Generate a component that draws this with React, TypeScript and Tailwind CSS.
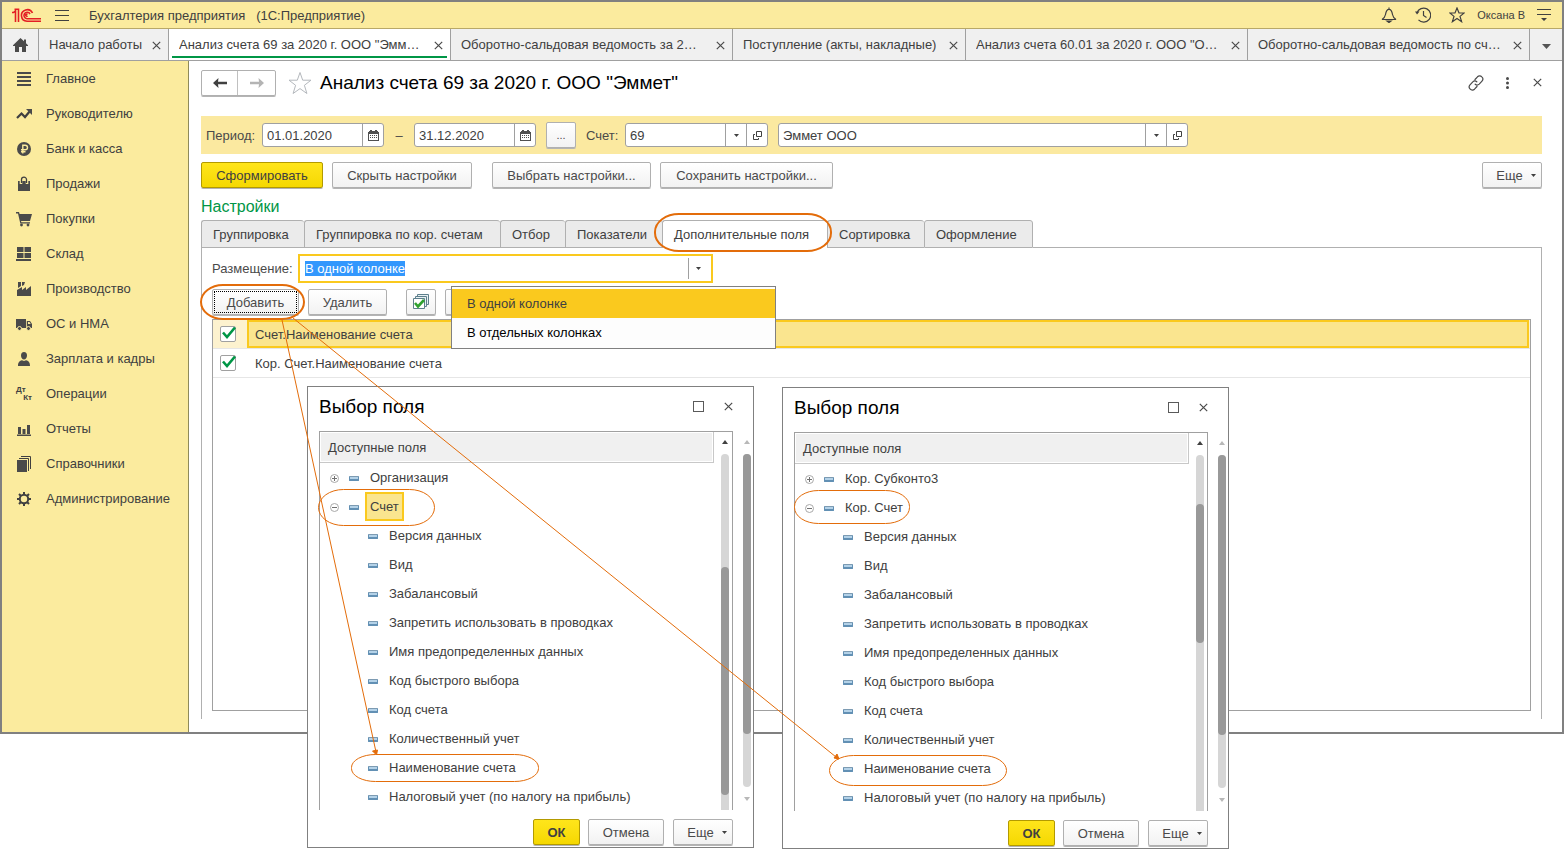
import { useEffect, useRef } from "react";
import type { ReactNode } from "react";
import { clsx } from "clsx";

const menu = [
  { label: "Главное", icon: <path d="M1 1h14v2H1zM1 5h14v2H1zM1 9h14v2H1zM1 13h14v2H1z" /> },
  {
    label: "Руководителю",
    icon: (
      <>
        <path d="M1 12l4.5-4.5 3.5 3.5 5-6" fill="none" stroke="currentColor" strokeWidth="2.2" />
        <path d="M10 3h6v6z" />
      </>
    ),
  },
  {
    label: "Банк и касса",
    icon: (
      <>
        <circle cx="8" cy="8" r="7" />
        <path d="M6.8 12.5V4.2h2.4a2.3 2.3 0 0 1 0 4.6H5M5 10.7h4.5" fill="none" stroke="#fbeb9e" strokeWidth="1.4" />
      </>
    ),
  },
  {
    label: "Продажи",
    icon: (
      <>
        <path d="M2 5h12v10H2z" />
        <path d="M5 8V3.5a3 2.8 0 0 1 6 0V8" fill="none" stroke="#fbeb9e" strokeWidth="2.6" />
        <path d="M5.5 7V3.5a2.5 2.3 0 0 1 5 0V7" fill="none" stroke="currentColor" strokeWidth="1.3" />
      </>
    ),
  },
  {
    label: "Покупки",
    icon: (
      <>
        <path d="M0 1h3l.6 2H16l-2 7H5l.4 1.2H14v1.3H4.3L2 2.5H0z" />
        <circle cx="5.5" cy="14" r="1.4" />
        <circle cx="12" cy="14" r="1.4" />
      </>
    ),
  },
  { label: "Склад", icon: <path d="M1 1h6.5v5H1zM8.5 1H15v5H8.5zM1 7h6.5v5H1zM8.5 7H15v5H8.5zM0 13h15v2H0z" /> },
  { label: "Производство", icon: <path d="M1 15V9l5-3v3l4-3v3l5-4v10zM2 1h3v4l-3 2zM6 1h3l-1 3-2 1z" /> },
  {
    label: "ОС и НМА",
    icon: (
      <>
        <path d="M0 3h10v9H0zM10.8 5H14l2 3v4h-5.2z" />
        <path d="M12 6h1.5l1.2 2H12z" fill="#fbeb9e" />
        <circle cx="3.5" cy="12.500" r="2" stroke="#fbeb9e" />
        <circle cx="12.5" cy="12.500" r="2" stroke="#fbeb9e" />
      </>
    ),
  },
  {
    label: "Зарплата и кадры",
    icon: <path d="M8 1c2 0 3 1.5 3 3.5S9.8 8.5 8 8.5 5 6.5 5 4.5 6 1 8 1zM2 15c0-3.500 1-5 4-5.800L8 10l2-.8c3 .8 4 2.300 4 5.800z" />,
  },
  { label: "Операции", icon: null },
  { label: "Отчеты", icon: <path d="M1 13.5h14V15H1zM2 6h3v7H2zM6.5 8h3v5h-3zM11 4h3v9h-3z" /> },
  {
    label: "Справочники",
    icon: (
      <>
        <path d="M1 4h10v12H1z" />
        <path d="M3 2.5h9.5V15M5 .5h9.5V13" fill="none" stroke="currentColor" />
      </>
    ),
  },
  {
    label: "Администрирование",
    icon: (
      <>
        <circle cx="8" cy="8" r="4.2" fill="none" stroke="currentColor" strokeWidth="2" />
        <path
          d="M8 1v2.5M8 12.5V15M1 8h2.5M12.5 8H15M3 3l2 2M11 11l2 2M13 3l-2 2M5 11l-2 2"
          stroke="currentColor"
          strokeWidth="2"
        />
      </>
    ),
  },
];

const openTabs = [
  { label: "Начало работы", width: "w-[130px]" },
  { label: 'Анализ счета 69 за 2020 г. ООО "Эмм…', width: "w-[282px]", active: true },
  { label: "Оборотно-сальдовая ведомость за 2…", width: "w-[282px]" },
  { label: "Поступление (акты, накладные)", width: "w-[233px]" },
  { label: 'Анализ счета 60.01 за 2020 г. ООО "О…', width: "w-[282px]" },
  { label: "Оборотно-сальдовая ведомость по сч…", width: "w-[282px]" },
];

const settingTabs = [
  { label: "Группировка", width: "w-[103px]" },
  { label: "Группировка по кор. счетам", width: "w-[196px]" },
  { label: "Отбор", width: "w-[65px]" },
  { label: "Показатели", width: "w-[97px]" },
  { label: "Дополнительные поля", width: "w-[165px]", active: true },
  { label: "Сортировка", width: "w-[97px]" },
  { label: "Оформление", width: "w-[109px]" },
];

const accountFields = [
  "Версия данных",
  "Вид",
  "Забалансовый",
  "Запретить использовать в проводках",
  "Имя предопределенных данных",
  "Код быстрого выбора",
  "Код счета",
  "Количественный учет",
  "Наименование счета",
  "Налоговый учет (по налогу на прибыль)",
];

function Cross({ className }: { className?: string }) {
  return (
    <svg className={clsx("size-[9px] shrink-0", className)} viewBox="0 0 9 9" fill="none" stroke="#4a4a4a" strokeWidth="1.2">
      <path d="M.8.8l7.4 7.4M8.2.8L.8 8.2" />
    </svg>
  );
}

function Caret({ className }: { className?: string }) {
  return (
    <svg className={clsx("h-[3px] w-[5px] shrink-0", className)} viewBox="0 0 5 3" fill="#404040">
      <path d="M0 0h5L2.5 3z" />
    </svg>
  );
}

type ButtonProps = {
  children: ReactNode;
  className?: string;
  primary?: boolean;
  label?: string;
};

function Button({ children, className, primary, label }: ButtonProps) {
  return (
    <button
      type="button"
      aria-label={label}
      className={clsx(
        "flex h-[26px] shrink-0 items-center justify-center rounded-[2px] border bg-linear-to-b shadow-[0_1px_0_#b4b4b4]",
        primary
          ? "border-[#b39a00] from-[#ffe51a] to-[#f5d800] text-[#404040]"
          : "border-[#b0b0b0] from-white to-[#f2f2f2] text-[#4a4a4a]",
        className,
      )}
    >
      {children}
    </button>
  );
}

function CalendarIcon() {
  return (
    <svg className="size-[11px]" viewBox="0 0 11 11" fill="#505050">
      <path d="M1 1h9v1H1zM0 3h11v1H0zM0 2h11v1H0zM0 4h1v7H0zM10 4h1v7h-1zM0 10h11v1H0z" />
      <path d="M2 0h2v2H2zM7 0h2v2H7z" />
      <path d="M2 5h1v1H2zM4 5h1v1H4zM6 5h1v1H6zM8 5h1v1H8zM2 7h1v1H2zM4 7h1v1H4zM6 7h1v1H6zM8 7h1v1H8z" />
    </svg>
  );
}

function OpenIcon() {
  return (
    <svg className="size-[9px]" viewBox="0 0 9 9" fill="none" stroke="#404040">
      <path d="M3.5.5h5v5h-5zM2 3.5H.5v5h5V7" />
    </svg>
  );
}

type FieldProps = {
  id: string;
  label: string;
  value: string;
  className?: string;
  children: ReactNode;
};

function Field({ id, label, value, className, children }: FieldProps) {
  return (
    <div className={clsx("flex h-6 rounded-[3px] border border-[#a0a0a0] bg-white", className)}>
      <input id={id} aria-label={label} defaultValue={value} className="min-w-0 flex-1 px-1 text-[#404040] outline-none" />
      {children}
    </div>
  );
}

function FieldButton({ label, children }: { label: string; children: ReactNode }) {
  return (
    <button type="button" aria-label={label} className="flex w-[21px] shrink-0 items-center justify-center border-l border-[#a0a0a0]">
      {children}
    </button>
  );
}

function TitleBar() {
  return (
    <header className="flex h-[27px] items-center border-b border-[#b8a868] bg-[#fbeb9e] px-[10px]">
      <svg className="h-[15px] w-[30px]" viewBox="0 0 30 15" fill="none" stroke="#e31e24" strokeWidth="1.6">
        <path d="M0 4.5h1.5L3.5 2.8V14M2.5 1.3h4V14" />
        <path d="M20.5 5a5.8 5.8 0 1 0-5.5 8.3h14" />
        <path d="M18 6a3.2 3.2 0 1 0-3 4.7h14" />
        <path d="M15.5 6.5a1 1 0 1 0 0 1.2" />
      </svg>
      <button type="button" aria-label="Меню" className="ml-[13px] flex w-[14px] flex-col gap-1">
        <span className="h-px bg-[#404040]" />
        <span className="h-px bg-[#404040]" />
        <span className="h-px bg-[#404040]" />
      </button>
      <p className="ml-5 whitespace-pre text-[#404040]">Бухгалтерия предприятия   (1С:Предприятие)</p>
      <div className="ml-auto flex items-center gap-[18px] text-[#404040]">
        <button type="button" aria-label="Оповещения">
          <svg className="size-4" viewBox="0 0 16 16" fill="none" stroke="currentColor" strokeWidth="1.2">
            <path d="M8 .5v2M1 12.500c2-1 3-2.500 3.500-5C5 4 6 2.300 8 2.300S11 4 11.500 7.500c.5 2.500 1.500 4 3.500 5z" />
            <path d="M6 14h4l-2 1.5z" fill="currentColor" />
          </svg>
        </button>
        <button type="button" aria-label="История">
          <svg className="size-4" viewBox="0 0 16 16" fill="none" stroke="currentColor" strokeWidth="1.2">
            <path d="M2 6A7 7 0 1 1 3.5 12.8M8.5 4v4.5l3 2" />
            <path d="M0 4.500h4.5L2 7.500z" fill="currentColor" stroke="none" />
          </svg>
        </button>
        <button type="button" aria-label="Избранное">
          <svg className="size-4" viewBox="0 0 16 16" fill="none" stroke="currentColor" strokeWidth="1.2">
            <path d="M8 1l2 5h5.200l-4.200 3.400 1.600 5.300L8 11.500l-4.600 3.200L5 9.400.8 6H6z" />
          </svg>
        </button>
        <div className="-ml-[6px] flex items-center gap-3">
          <span className="text-[11px]">Оксана В</span>
          <button type="button" aria-label="Сервис">
            <svg className="h-3 w-[15px]" viewBox="0 0 15 12" fill="currentColor">
              <path d="M0 0h14v1H0zM0 5h14v1H0zM4 9h6l-3 3z" />
            </svg>
          </button>
        </div>
      </div>
    </header>
  );
}

function OpenTabs() {
  return (
    <nav className="flex h-8 border-b border-[#a0a0a0] bg-[#f0f0f0] text-[#404040]">
      <button type="button" aria-label="Начальная страница" className="flex w-[37px] shrink-0 items-center justify-center border-r border-[#a0a0a0]">
        <svg className="h-[14px] w-[15px]" viewBox="0 0 15 14" fill="#4a4a4a">
          <path d="M7.5 0L11 3.3V1.500h2v3.700l2 2v.8h-2v6H9V9H6v5H2V8H0v-.8z" />
        </svg>
      </button>
      {openTabs.map((tab) => (
        <div
          key={tab.label}
          className={clsx("flex shrink border-r border-[#a0a0a0] px-[3px]", tab.width, tab.active && "bg-white")}
        >
          <div className={clsx("flex min-w-0 flex-1 items-center justify-between pr-1 pl-[7px]", tab.active && "mb-[2px] border-b-2 border-[#009646] pt-1")}>
            <a href="#" className="truncate">{tab.label}</a>
            <button type="button" aria-label="Закрыть">
              <Cross className="mt-px size-2" />
            </button>
          </div>
        </div>
      ))}
      <button type="button" aria-label="Все окна" className="flex flex-1 items-center justify-center">
        <svg className="mt-1 h-[5px] w-[9px]" viewBox="0 0 9 5" fill="#555">
          <path d="M0 0h9L4.5 5z" />
        </svg>
      </button>
    </nav>
  );
}

function Sidebar() {
  return (
    <aside className="w-[187px] shrink-0 border-r border-[#8f8a5a] bg-[#fbeb9e]">
      <ul>
        {menu.map((item) => (
          <li key={item.label}>
            <a href="#" className="flex h-[35px] items-center gap-[14px] pl-[14px] text-[#404040]">
              {item.icon ? (
                <svg className="size-4" viewBox="0 0 16 16" fill="#4a4a4a">
                  {item.icon}
                </svg>
              ) : (
                <span className="flex w-4 flex-col text-[8px] leading-2 font-bold">
                  <span>Дт</span>
                  <span className="text-right">Кт</span>
                </span>
              )}
              {item.label}
            </a>
          </li>
        ))}
      </ul>
    </aside>
  );
}

function PageHeader() {
  return (
    <div className="flex h-[27px] items-center">
      <div className="flex h-[26px] rounded-[2px] border border-[#b0b0b0] shadow-[0_1px_0_#b4b4b4]">
        <button type="button" aria-label="Назад" className="flex w-9 items-center justify-center border-r border-[#c0c0c0]">
          <svg className="h-[10px] w-[14px]" viewBox="0 0 14 10" fill="#404040">
            <path d="M0 5l5.5-5L5 3.8h9v2.400H5L5.5 10z" />
          </svg>
        </button>
        <button type="button" aria-label="Вперед" className="flex w-[37px] items-center justify-center">
          <svg className="h-[10px] w-[14px]" viewBox="0 0 14 10" fill="#b4b4b4">
            <path d="M14 5L8.5 0 9 3.8H0v2.400h9L8.5 10z" />
          </svg>
        </button>
      </div>
      <button type="button" aria-label="Добавить в избранное" className="ml-3">
        <svg className="size-6" viewBox="0 0 24 24" fill="none" stroke="#b4b8bd">
          <path d="M12 1.5l2.7 7.7H23l-6.6 5.1 2.5 8.2L12 17.6l-6.9 4.9 2.5-8.2L1 9.2h8.3z" />
        </svg>
      </button>
      <h1 className="ml-2 text-[19px] text-black">Анализ счета 69 за 2020 г. ООО "Эммет"</h1>
      <div className="ml-auto flex items-center">
        <button type="button" aria-label="Получить ссылку">
          <svg className="size-4" viewBox="0 0 16 16" fill="none" stroke="#4a4a4a" strokeWidth="1.2" strokeLinecap="round">
            <path d="M7 4.5l2.5-2.7a3 3 0 0 1 4.3.1 3 3 0 0 1 .2 4.200l-2.800 3a3 3 0 0 1-4 .1M9 11.500l-2.500 2.700a3 3 0 0 1-4.300-.1 3 3 0 0 1-.2-4.200l2.800-3a3 3 0 0 1 4-.1" />
          </svg>
        </button>
        <button type="button" aria-label="Еще" className="ml-[22px]">
          <svg className="h-3 w-[3px]" viewBox="0 0 3 12" fill="#4a4a4a">
            <circle cx="1.5" cy="1.5" r="1.5" />
            <circle cx="1.5" cy="6" r="1.5" />
            <circle cx="1.5" cy="10.5" r="1.5" />
          </svg>
        </button>
        <button type="button" aria-label="Закрыть" className="ml-6">
          <Cross />
        </button>
      </div>
    </div>
  );
}

function FilterBar() {
  return (
    <form className="mt-5 flex h-[38px] items-center bg-[#fbe9a0] px-[5px] text-[#4a4a4a]" onSubmit={(e) => e.preventDefault()}>
      <label htmlFor="date-from" className="w-14">Период:</label>
      <Field id="date-from" label="Начало периода" value="01.01.2020" className="w-[122px]">
        <FieldButton label="Выбрать дату"><CalendarIcon /></FieldButton>
      </Field>
      <span className="w-[30px] text-center">–</span>
      <Field id="date-to" label="Конец периода" value="31.12.2020" className="w-[122px]">
        <FieldButton label="Выбрать дату"><CalendarIcon /></FieldButton>
      </Field>
      <Button className="ml-[10px] w-[30px] text-[11px]">...</Button>
      <label htmlFor="account" className="ml-[10px] w-[39px]">Счет:</label>
      <Field id="account" label="Счет" value="69" className="w-[143px]">
        <FieldButton label="Выбрать"><Caret /></FieldButton>
        <FieldButton label="Открыть"><OpenIcon /></FieldButton>
      </Field>
      <Field id="company" label="Организация" value="Эммет ООО" className="ml-[10px] w-[410px]">
        <FieldButton label="Выбрать"><Caret /></FieldButton>
        <FieldButton label="Открыть"><OpenIcon /></FieldButton>
      </Field>
    </form>
  );
}

function PlacementSelect() {
  const input = useRef<HTMLInputElement>(null);

  useEffect(() => {
    input.current?.focus();
    input.current?.select();
  }, []);

  return (
    <div className="flex items-center">
      <label htmlFor="placement" className="w-[86px] text-[#4a4a4a]">Размещение:</label>
      <div className="relative flex h-[29px] w-[415px] items-center border-2 border-[#fac91e] bg-white">
        <input
          id="placement"
          ref={input}
          role="combobox"
          aria-expanded="true"
          aria-controls="placement-options"
          defaultValue="В одной колонке"
          className="min-w-0 flex-1 px-[5px] text-[#404040] outline-none selection:bg-[#3297fd] selection:text-white"
        />
        <button type="button" aria-label="Открыть список" className="flex h-[21px] w-[23px] items-center border-l border-[#a0a0a0] pl-[7px]">
          <Caret />
        </button>
        <ul
          id="placement-options"
          role="listbox"
          className="absolute top-[30px] left-[151px] z-10 w-[325px] border border-[#808080] bg-[#fdfdfd] pt-[2px] pb-px text-black"
        >
          <li role="option" aria-selected="true" className="flex h-[29px] items-center bg-[#fac91e] pl-[15px] text-[#404040]">
            В одной колонке
          </li>
          <li role="option" aria-selected="false" className="flex h-[29px] items-center pl-[15px]">
            В отдельных колонках
          </li>
        </ul>
      </div>
    </div>
  );
}

function FieldRow({ label, selected }: { label: string; selected?: boolean }) {
  return (
    <li className="border-b border-[#e6e6e6]">
      <label className={clsx("flex h-7 items-stretch", selected && "bg-[#fdf2cf]")}>
        <span className="relative flex w-[34px] items-center pl-[7px]">
          <input type="checkbox" defaultChecked className="size-4 appearance-none rounded-[2px] border border-[#a0a0a0] bg-white" />
          <svg className="pointer-events-none absolute left-[9px] size-[14px]" viewBox="0 0 14 14" fill="none" stroke="#009646" strokeWidth="2.6">
            <path d="M1 5.5L5 10 13 .5" />
          </svg>
        </span>
        <span
          className={clsx(
            "mr-px flex flex-1 items-center border-2 pl-[6px] text-[#404040]",
            selected ? "border-[#fac91e] bg-[#fae58f]" : "border-transparent",
          )}
        >
          {label}
        </span>
      </label>
    </li>
  );
}

function CheckAllIcon() {
  return (
    <svg className="size-4" viewBox="0 0 16 16" fill="none">
      <path d="M4.5 3V.5h11v10H13M2.5 5V2.5h11v10H11" stroke="#5d7f8c" fill="#e8f0f2" />
      <path d="M.5 4.5h11v10H.5z" fill="#fff" stroke="#5d7f8c" />
      <path d="M2 9l3 3.5L11 6" stroke="#2fa12f" strokeWidth="2.6" />
    </svg>
  );
}

function Settings() {
  return (
    <section>
      <h2 className="mt-[7px] h-[25px] text-[16px] leading-6 text-[#009646]">Настройки</h2>
      <div className="flex">
        <div role="tablist" className="flex text-[#404040]">
          {settingTabs.map((tab) => (
            <button
              key={tab.label}
              type="button"
              role="tab"
              aria-selected={!!tab.active}
              className={clsx(
                "h-7 rounded-t-[3px] border-t border-l border-[#b0b0b0] px-[11px] text-left whitespace-nowrap last:border-r",
                tab.width,
                tab.active ? "bg-white pb-px" : "border-b bg-[#ebebeb]",
              )}
            >
              {tab.label}
            </button>
          ))}
        </div>
        <div className="flex-1 border-b border-[#b0b0b0]" />
      </div>
      <div className="border-x border-[#b0b0b0] px-[10px] pt-[6px] pb-2">
        <PlacementSelect />
        <div className="mt-[6px] flex">
          <Button className="w-[87px] p-px">
            <span className="flex h-full w-full items-center justify-center border border-dotted border-black">Добавить</span>
          </Button>
          <Button className="ml-[9px] w-[79px]">Удалить</Button>
          <Button className="ml-[19px] w-[30px]" label="Установить флажки"><CheckAllIcon /></Button>
          <Button className="ml-[9px] w-[30px]" label="Снять флажки">{null}</Button>
        </div>
        <ul className="mt-1 min-h-[392px] border border-[#a0a0a0]">
          <FieldRow label="Счет.Наименование счета" selected />
          <FieldRow label="Кор. Счет.Наименование счета" />
        </ul>
      </div>
    </section>
  );
}

function Dash() {
  return <span className="mt-[2px] h-[5px] w-[10px] shrink-0 rounded-[1px] border border-b-2 border-[#6290b4] border-t-[#7d9bb2] bg-[#b4d2e8]" />;
}

function Expander({ open }: { open?: boolean }) {
  return (
    <button type="button" aria-label={open ? "Свернуть" : "Развернуть"} className="mt-[2px] mr-[10px]">
      <svg className="size-[9px]" viewBox="0 0 9 9" fill="none" stroke="#a8a8a8">
        <circle cx="4.5" cy="4.5" r="4" />
        <path d={open ? "M2 4.5h5" : "M2 4.5h5M4.5 2v5"} stroke="#707070" />
      </svg>
    </button>
  );
}

type PickerProps = {
  id: string;
  closed: string;
  opened: string;
  current?: boolean;
  thumb: string;
  className: string;
};

function FieldPicker({ id, closed, opened, current, thumb, className }: PickerProps) {
  return (
    <section role="dialog" aria-labelledby={id} className={clsx("absolute w-[447px] border border-[#808080] bg-white pb-[2px] pl-[11px] text-[#404040]", className)}>
      <div className="mb-[5px] flex h-[39px] items-center pr-5">
        <h2 id={id} className="text-[19px] text-black">Выбор поля</h2>
        <button type="button" aria-label="Развернуть окно" className="ml-auto size-[11px] border border-[#5a5a5a]" />
        <button type="button" aria-label="Закрыть" className="ml-5">
          <Cross />
        </button>
      </div>
      <div className="flex h-[379px] pr-[2px]">
        <div className="flex flex-1 border border-b-0 border-[#a0a0a0]">
          <div className="flex-1">
            <div className="flex h-[31px] items-center border-r border-b border-[#c8c8c8] bg-[#f0f0f0] pl-2 shadow-[inset_0_0_0_1px_white]">
              Доступные поля
            </div>
            <ul>
              <li className="flex h-[29px] items-center pl-[10px]">
                <Expander />
                <Dash />
                <span className="ml-[11px]">{closed}</span>
              </li>
              <li className="flex h-[29px] items-center pl-[10px]">
                <Expander open />
                <Dash />
                <span className={clsx("ml-[6px] flex h-[29px] items-center border-2 px-[3px]", current ? "border-[#fac91e] bg-[#fae58f]" : "border-transparent")}>
                  {opened}
                </span>
              </li>
              {accountFields.map((field) => (
                <li key={field} className="flex h-[29px] items-center gap-[11px] pl-12">
                  <Dash />
                  {field}
                </li>
              ))}
            </ul>
          </div>
          <div className="flex w-[18px] flex-col items-center pt-2 pl-1">
            <svg className="h-1 w-[6px]" viewBox="0 0 6 4" fill="#404040"><path d="M3 0l3 4H0z" /></svg>
            <div className="mt-[10px] w-2 flex-1 rounded-t-full bg-[#d6d6d6]">
              <div className={clsx("rounded-full bg-[#999]", thumb)} />
            </div>
          </div>
        </div>
        <div className="ml-[10px] flex w-2 flex-col items-center py-[9px]">
          <svg className="h-1 w-[6px]" viewBox="0 0 6 4" fill="#b8b8b8"><path d="M3 0l3 4H0z" /></svg>
          <div className="my-[10px] w-2 flex-1 rounded-full bg-[#d6d6d6]">
            <div className="h-[280px] rounded-full bg-[#999]" />
          </div>
          <svg className="h-1 w-[6px]" viewBox="0 0 6 4" fill="#b8b8b8"><path d="M3 4l3-4H0z" /></svg>
        </div>
      </div>
      <div className="mt-[9px] flex justify-end pr-5">
        <Button primary className="w-[47px] font-bold">ОК</Button>
        <Button className="ml-2 w-[76px]">Отмена</Button>
        <Button className="ml-[9px] w-[60px] gap-2 pl-2">Еще <Caret className="mt-px" /></Button>
      </div>
    </section>
  );
}

function Callouts() {
  return (
    <svg className="pointer-events-none absolute top-0 left-0 z-20 h-[851px] w-[1564px]" viewBox="0 0 1564 851" fill="none" stroke="#e36c0a">
      <g strokeWidth="2">
        <rect x="655" y="214" width="176" height="37" rx="24" ry="18" />
        <rect x="201" y="285" width="103" height="34" rx="22" ry="17" />
      </g>
      <rect x="318.5" y="489.5" width="116" height="36" rx="25" ry="18" />
      <rect x="351.5" y="754.5" width="187" height="27" rx="24" ry="13" />
      <rect x="794.5" y="490.5" width="115" height="33" rx="24" ry="16" />
      <rect x="829.5" y="755.5" width="177" height="30" rx="24" ry="15" />
      <path d="M282 320l94 432M293 318l543 439" />
      <path d="M376.5 755l-4-4 5-1zM839 759l-5-1 3-4z" fill="#e36c0a" />
    </svg>
  );
}

export default function App() {
  return (
    <div className="relative min-h-[851px] bg-white font-['Liberation_Sans',Arial,sans-serif] text-[13px] leading-[15px]">
      <div className="border-2 border-[#808080]">
        <TitleBar />
        <OpenTabs />
        <div className="flex">
          <Sidebar />
          <main className="min-w-0 flex-1 pt-2 pr-5 pb-[13px] pl-3">
            <PageHeader />
            <FilterBar />
            <div className="mt-2 flex">
              <Button primary className="w-[122px]">Сформировать</Button>
              <Button className="ml-[9px] w-[140px]">Скрыть настройки</Button>
              <Button className="ml-5 w-[159px]">Выбрать настройки...</Button>
              <Button className="ml-[9px] w-[173px]">Сохранить настройки...</Button>
              <Button className="ml-auto w-[60px] gap-2 pl-2">Еще <Caret className="mt-px" /></Button>
            </div>
            <Settings />
          </main>
        </div>
      </div>
      <FieldPicker
        id="picker-account"
        closed="Организация"
        opened="Счет"
        current
        thumb="mt-[113px] h-[228px]"
        className="top-[386px] left-[307px]"
      />
      <FieldPicker
        id="picker-cor-account"
        closed="Кор. Субконто3"
        opened="Кор. Счет"
        thumb="mt-[49px] h-[139px]"
        className="top-[387px] left-[782px]"
      />
      <Callouts />
    </div>
  );
}
